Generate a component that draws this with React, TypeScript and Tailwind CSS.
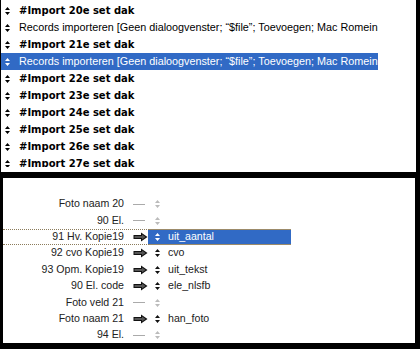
const scriptRows = [
  { text: '#Import 20e set dak', bold: true },
  { text: 'Records importeren [Geen dialoogvenster; “$file”; Toevoegen; Mac Romein', bold: false },
  { text: '#Import 21e set dak', bold: true },
  { text: 'Records importeren [Geen dialoogvenster; “$file”; Toevoegen; Mac Romein', bold: false, selected: true },
  { text: '#Import 22e set dak', bold: true },
  { text: '#Import 23e set dak', bold: true },
  { text: '#Import 24e set dak', bold: true },
  { text: '#Import 25e set dak', bold: true },
  { text: '#Import 26e set dak', bold: true },
  { text: '#Import 27e set dak', bold: true },
];

const mapRows = [
  { source: 'Foto naam 20', target: '' },
  { source: '90 El.', target: '' },
  { source: '91 Hv. Kopie19', target: 'uit_aantal', selected: true },
  { source: '92 cvo Kopie19', target: 'cvo' },
  { source: '93 Opm. Kopie19', target: 'uit_tekst' },
  { source: '90 El. code', target: 'ele_nlsfb' },
  { source: 'Foto veld 21', target: '' },
  { source: 'Foto naam 21', target: 'han_foto' },
  { source: '94 El.', target: '' },
];

function Handle({ color }: { color: string }) {
  return (
    <svg width="5" height="8" viewBox="0 0 5 8" className="shrink-0">
      <path d="M2.5 0 L5 3 L0 3 Z M0 5 L5 5 L2.5 8 Z" fill={color} />
    </svg>
  );
}

function Arrow() {
  return (
    <svg width="15" height="10" viewBox="0 0 15 10">
      <path d="M0.5 3 L8 3 L8 0.5 L14.5 5 L8 9.5 L8 7 L0.5 7 Z" fill="#111" />
      <path d="M1.5 4 L9 4 L9 2.5 L12.5 5 L9 7.5 L9 6 L1.5 6 Z" fill="#555" />
    </svg>
  );
}

export default function App() {
  return (
    <div className="w-[420px] h-[349px] bg-black flex flex-col overflow-hidden">
      {/* Script steps */}
      <div className="ml-[1px] w-[415px] h-[172px] bg-white">
        <div className="h-[167px] overflow-hidden pt-[2px]">
          {scriptRows.map((row, i) => (
            <div
              key={i}
              className={`h-[17px] flex items-center pl-[4px] ${row.selected ? 'bg-[#316ac5] text-white w-[377px]' : 'text-black'}`}
            >
              <Handle color={row.selected ? '#ffffff' : '#000000'} />
              <span
                className={`ml-[9px] whitespace-nowrap ${
                  row.bold
                    ? "font-['DejaVu_Sans',sans-serif] font-bold text-[10px]"
                    : "font-['Liberation_Sans',sans-serif] text-[10.8px]"
                }`}
              >
                {row.text}
              </span>
            </div>
          ))}
        </div>
      </div>

      {/* Field mapping */}
      <div className="mt-[6px] ml-[3px] w-[412px] h-[165px] bg-white overflow-hidden pt-[18px] font-['Liberation_Sans',sans-serif] text-[10.6px] text-[#222]">
        {mapRows.map((row, i) => (
          <div key={i} className="h-[16.4px] flex items-center relative">
            {row.selected && (
              <>
                <div className="absolute left-0 w-[146px] top-0 border-t border-dotted border-[#8b7b5b]" />
                <div className="absolute left-0 w-[146px] bottom-0 border-b border-dotted border-[#8b7b5b]" />
              </>
            )}
            <div className="w-[121px] text-right whitespace-nowrap">{row.source}</div>
            <div className="w-[24px] pl-[9px] flex items-center">
              {row.target ? <Arrow /> : <div className="w-[12px] h-px bg-[#aaa]" />}
            </div>
            <div
              className={`flex items-center h-full pl-[7px] ${
                row.selected ? 'bg-[#316ac5] text-white w-[143px] border-y border-[#9c8b6a]' : ''
              }`}
            >
              <Handle color={row.selected ? '#ffffff' : row.target ? '#111111' : '#bbbbbb'} />
              <span className="ml-[8px] whitespace-nowrap">{row.target}</span>
            </div>
          </div>
        ))}
      </div>
    </div>
  );
}
